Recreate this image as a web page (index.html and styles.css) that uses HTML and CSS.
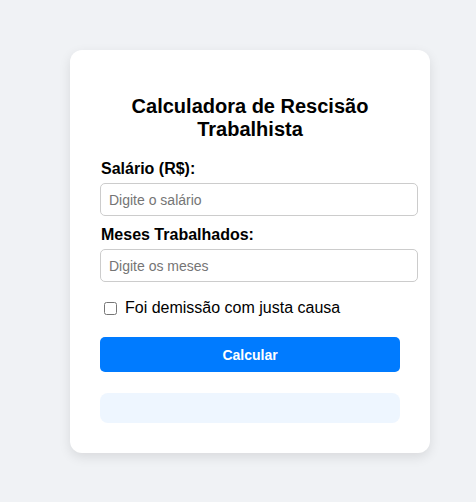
FILE: index.html
```html
<!DOCTYPE html>
<html lang="pt-BR">
<head>
<meta charset="UTF-8">
<title>Calculadora de Rescisão Trabalhista</title>
<link rel="stylesheet" href="styles.css">
</head>
<body>
<div class="card">
  <h2 class="title">Calculadora de Rescisão Trabalhista</h2>
  <label class="field-label" for="salario">Salário (R$):</label>
  <input class="field-input" id="salario" type="number" placeholder="Digite o salário">
  <label class="field-label" for="meses">Meses Trabalhados:</label>
  <input class="field-input" id="meses" type="number" placeholder="Digite os meses">
  <label class="check-row"><input type="checkbox" class="check"> Foi demissão com justa causa</label>
  <button class="btn" type="button">Calcular</button>
  <div class="result"></div>
</div>
</body>
</html>
```
FILE: styles.css
```css
html, body {
  margin: 0;
  background: #f0f2f5;
}
body {
  font-family: "Liberation Sans", Arial, sans-serif;
  padding: 50px 0 0 70px;
  min-height: 502px;
  box-sizing: border-box;
}
.card {
  width: 300px;
  padding: 30px;
  background: #ffffff;
  border-radius: 12px;
  box-shadow: 0 4px 12px rgba(0, 0, 0, 0.1);
}
.title {
  font-size: 20px;
  text-align: center;
  margin: 15px 0 19px;
  line-height: 23px;
  color: #000;
}
.field-label {
  display: block;
  font-weight: bold;
  font-size: 16px;
  margin-bottom: 5px;
  padding-left: 1px;
}
.field-input {
  display: block;
  width: 100%;
  padding: 8px 8px 7px;
  font-size: 14px;
  font-family: "Liberation Sans", Arial, sans-serif;
  border: 1px solid #ccc;
  border-radius: 5px;
  margin: 0 0 10px;
}
.field-input::placeholder {
  color: #757575;
}
.check-row {
  display: flex;
  align-items: center;
  font-size: 16px;
  margin-top: 17px;
}
.check {
  margin: 0 8px 0 4px;
  width: 13px;
  height: 13px;
}
.btn {
  display: block;
  width: 100%;
  margin-top: 20px;
  height: 35px;
  background: #007bff;
  color: #fff;
  font-weight: bold;
  font-size: 14px;
  font-family: "Liberation Sans", Arial, sans-serif;
  border: none;
  border-radius: 5px;
}
.result {
  margin-top: 21px;
  height: 30px;
  background: #eef6ff;
  border-radius: 8px;
}
```
